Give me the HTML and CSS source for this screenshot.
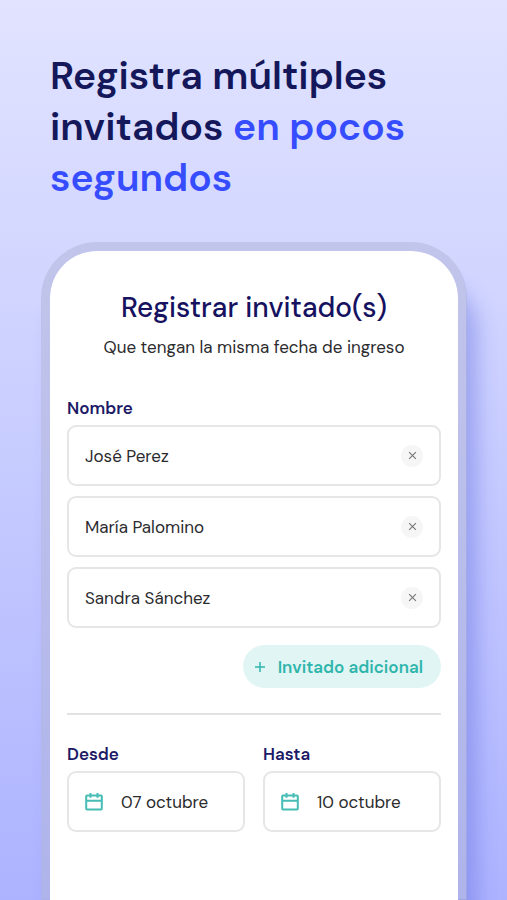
FILE: index.html
```html
<!DOCTYPE html>
<html lang="es">
	<head>
		<meta charset="utf-8">
		<meta name="viewport" content="width=device-width, initial-scale=1">
		<title>Registrar invitados</title>
		<link rel="stylesheet" href="styles.css">
	</head>
	<body>
		<header>
			<h1>Registra múltiples invitados <span>en pocos segundos</span></h1>
		</header>
		<main class="phone">
			<h2>Registrar invitado(s)</h2>
			<p class="subtitle">Que tengan la misma fecha de ingreso</p>
			<form>
				<label for="guest1">Nombre</label>
				<div class="guests">
					<div class="field">
						<input type="text" id="guest1" value="José Perez">
						<button type="button" class="remove" aria-label="Quitar">
							<svg viewBox="0 0 8 8"><path d="M1 1l6 6M7 1l-6 6"/></svg>
						</button>
					</div>
					<div class="field">
						<input type="text" aria-label="Nombre" value="María Palomino">
						<button type="button" class="remove" aria-label="Quitar">
							<svg viewBox="0 0 8 8"><path d="M1 1l6 6M7 1l-6 6"/></svg>
						</button>
					</div>
					<div class="field">
						<input type="text" aria-label="Nombre" value="Sandra Sánchez">
						<button type="button" class="remove" aria-label="Quitar">
							<svg viewBox="0 0 8 8"><path d="M1 1l6 6M7 1l-6 6"/></svg>
						</button>
					</div>
				</div>
				<button type="button" class="add">
					<svg viewBox="0 0 12 12"><path d="M6 1v10M1 6h10"/></svg>
					Invitado adicional
				</button>
				<hr>
				<div class="dates">
					<div>
						<label for="from">Desde</label>
						<div class="field">
							<svg class="calendar" viewBox="0 0 18 18"><path d="M2 2.5h14q.8 0 .8.8v12.4q0 .8-.8.8h-14q-.8 0-.8-.8v-12.4q0-.8.8-.8zM1 7.8h16M5.5 0v4.8M12.5 0v4.8"/></svg>
							<input type="text" id="from" value="07 octubre">
						</div>
					</div>
					<div>
						<label for="to">Hasta</label>
						<div class="field">
							<svg class="calendar" viewBox="0 0 18 18"><path d="M2 2.5h14q.8 0 .8.8v12.4q0 .8-.8.8h-14q-.8 0-.8-.8v-12.4q0-.8.8-.8zM1 7.8h16M5.5 0v4.8M12.5 0v4.8"/></svg>
							<input type="text" id="to" value="10 octubre">
						</div>
					</div>
				</div>
			</form>
		</main>
	</body>
</html>
```
FILE: styles.css
```css
*{
	box-sizing:border-box;
}
body{
	margin:0;
	min-height:100vh;
	display:flex;
	flex-direction:column;
	overflow-x:hidden;
	font-family:"DM Sans", Inter, sans-serif;
	font-size:17px;
	color:#2b2b2e;
	background:linear-gradient(#e1e3ff, #d2d6ff 30%, #adb3ff);
}
header{
	padding:50px 50px 39px;
}
h1{
	margin:0;
	font-size:39px;
	line-height:51px;
	font-weight:600;
	color:#14185a; /*navy*/
}
h1 span{
	color:#364cff; /*bright blue*/
}
.phone{
	flex:1;
	margin:0 40px 0 41px;
	padding:37px 17px 60px;
	border:9px solid #bfc4ec;
	border-color:rgba(175,180,215,.5);
	border-bottom:0;
	border-radius:56px 56px 0 0;
	background:#fff;
	background-clip:padding-box;
	box-shadow:12px 34px 20px -2px rgba(100,110,225,.45);
}
h2{
	margin:0;
	font-size:28px;
	line-height:40px;
	font-weight:500;
	text-align:center;
	color:#16125f;
}
.subtitle{
	margin:7px 0 37px;
	line-height:24px;
	text-align:center;
}
label{
	display:block;
	margin-bottom:5px;
	line-height:24px;
	font-weight:600;
	color:#201a66;
}
.guests{
	display:flex;
	flex-direction:column;
	gap:10px;
}
.field{
	display:flex;
	align-items:center;
	height:61px;
	padding:0 16px;
	border:2px solid #e6e6e6;
	border-radius:9px;
}
input{
	flex:1;
	min-width:0;
	padding:0;
	border:0;
	outline:0;
	font:inherit;
	color:inherit;
	background:none;
}
button{
	padding:0;
	border:0;
	font:inherit;
	cursor:pointer;
}
svg{
	fill:none;
	stroke:currentColor;
}
.remove{
	display:flex;
	align-items:center;
	justify-content:center;
	width:22px;
	height:22px;
	border-radius:50%;
	color:#777;
	background:#f6f6f6;
}
.remove svg{
	width:9px;
	height:9px;
}
.add{
	display:flex;
	align-items:center;
	gap:12px;
	height:43px;
	margin:17px 0 0 auto;
	padding:0 18px 0 11px;
	border-radius:22px;
	font-weight:600;
	color:#2fb5ac; /*teal*/
	background:#e1f5f4;
}
.add svg{
	width:12px;
	height:12px;
	stroke-width:1.5;
}
hr{
	height:2px;
	margin:25px 0 27px;
	border:0;
	background:#e2e2e2;
}
.dates{
	display:grid;
	grid-template-columns:repeat(auto-fit, minmax(140px, 1fr));
	gap:18px;
}
.calendar{
	width:18px;
	height:18px;
	margin-right:18px;
	stroke-width:2;
	color:#45bdb5;
}
```
